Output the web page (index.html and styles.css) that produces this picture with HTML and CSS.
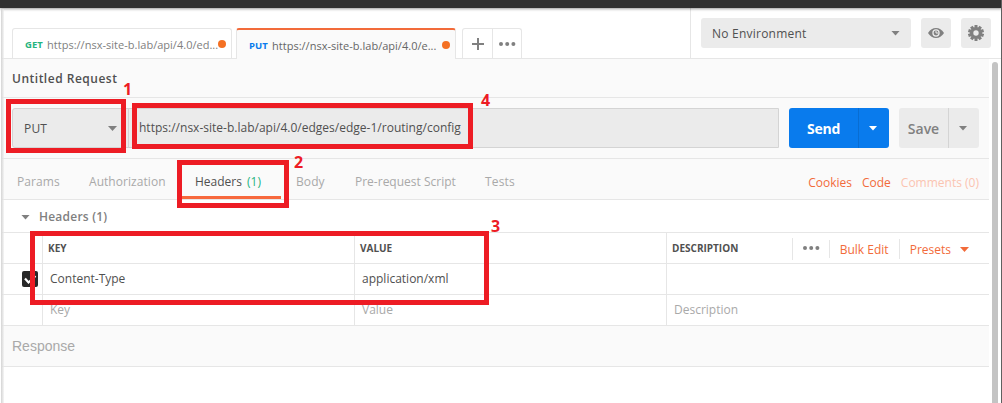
FILE: index.html
```html
<!DOCTYPE html>
<html lang="en">
<head>
<meta charset="utf-8">
<title>Untitled Request</title>
<link rel="stylesheet" href="styles.css">
</head>
<body>
<div class="app">
  <div class="titlebar"></div>
  <header class="top">
    <nav class="tabs">
      <div class="tab"><span class="method get">GET</span><span class="tab-url first">https://nsx-site-b.lab/api/4.0/ed...</span><i class="dot"></i></div>
      <div class="tab active"><span class="method put">PUT</span><span class="tab-url second">https://nsx-site-b.lab/api/4.0/e...</span><i class="dot"></i></div>
      <div class="tab-tools">
        <span class="tool"><svg width="12" height="12" viewBox="0 0 12 12"><path d="M6 0v12M0 6h12" stroke="#808080" stroke-width="2"/></svg></span>
        <span class="tool"><svg width="17" height="4" viewBox="0 0 17 4" fill="#808080"><circle cx="2" cy="2" r="2"/><circle cx="8.2" cy="2" r="2"/><circle cx="14.4" cy="2" r="2"/></svg></span>
      </div>
    </nav>
    <div class="env">
      <div class="env-select"><span class="env-name">No Environment</span><i class="caret"></i></div>
      <button class="icon-btn"><svg width="16" height="10" viewBox="0 0 16 10"><path d="M0 5Q3.2 0 8 0t8 5Q12.8 10 8 10T0 5z" fill="#808080"/><circle cx="8" cy="5" r="3.7" fill="#ebebeb"/><circle cx="8" cy="5" r="2.4" fill="#808080"/><path d="M8 3v2h2" stroke="#ebebeb" fill="none"/></svg></button>
      <button class="icon-btn"><svg width="16" height="16" viewBox="-8 -8 16 16"><g fill="#808080"><circle r="6"/><path id="t" d="M-1.5-8h3v16h-3z"/><use href="#t" transform="rotate(36)"/><use href="#t" transform="rotate(72)"/><use href="#t" transform="rotate(108)"/><use href="#t" transform="rotate(144)"/></g><circle r="2.7" fill="#ebebeb"/></svg></button>
    </div>
  </header>
  <main class="main">
    <section class="request-name"><span class="name-text">Untitled Request</span></section>
    <section class="builder">
      <div class="url-group">
        <div class="verb"><span class="verb-text">PUT</span><i class="caret"></i></div>
        <div class="url"><span class="url-text">https://nsx-site-b.lab/api/4.0/edges/edge-1/routing/config</span></div>
      </div>
      <div class="split send"><b class="split-label send-text">Send</b><span class="split-drop"><i class="caret"></i></span></div>
      <div class="split save"><b class="split-label save-text">Save</b><span class="split-drop"><i class="caret"></i></span></div>
    </section>
    <section class="subtabs">
      <div class="subtab-list">
        <span class="t-params">Params</span><span class="t-auth">Authorization</span><span class="t-headers">Headers <em>(1)</em></span><span class="t-body">Body</span><span class="t-pre">Pre-request Script</span><span class="t-tests">Tests</span>
      </div>
      <div class="links"><span class="l-cookies">Cookies</span><span class="l-code">Code</span><span class="l-comments">Comments (0)</span></div>
    </section>
    <section class="group"><i class="caret"></i><span class="group-text">Headers (1)</span></section>
    <section class="grid">
      <div class="row head">
        <div class="cell"></div>
        <div class="cell"><span class="h-key">KEY</span></div>
        <div class="cell"><span class="h-value">VALUE</span></div>
        <div class="cell last">
          <span class="h-desc">DESCRIPTION</span>
          <div class="actions">
            <span class="more"><svg width="17" height="4" viewBox="0 0 17 4" fill="#808080"><circle cx="2" cy="2" r="2"/><circle cx="8.2" cy="2" r="2"/><circle cx="14.4" cy="2" r="2"/></svg></span>
            <span class="bulk"><span class="bulk-text">Bulk Edit</span></span>
            <span class="presets"><span class="presets-text">Presets</span><i class="caret"></i></span>
          </div>
        </div>
      </div>
      <div class="row">
        <div class="cell check-cell"><span class="check"><svg width="16" height="16" viewBox="0 0 16 16"><path d="M3 7.5l3.5 4L13.5 5" stroke="#fff" stroke-width="2.2" fill="none"/></svg></span></div>
        <div class="cell"><span class="c-type">Content-Type</span></div>
        <div class="cell"><span class="c-xml">application/xml</span></div>
        <div class="cell"></div>
      </div>
      <div class="row blank">
        <div class="cell"></div>
        <div class="cell"><span class="p-key">Key</span></div>
        <div class="cell"><span class="p-value">Value</span></div>
        <div class="cell"><span class="p-desc">Description</span></div>
      </div>
    </section>
    <section class="response"><span class="response-text">Response</span></section>
  </main>
  <div class="left-shade"></div>
  <div class="scrollbar"></div>
  <div class="window-edge"></div>
  <div class="mark m1"></div><div class="mark m2"></div><div class="mark m3"></div><div class="mark m4"></div>
  <b class="num n1">1</b><b class="num n2">2</b><b class="num n3">3</b><b class="num n4">4</b>
</div>
</body>
</html>
```
FILE: styles.css
```css
* { box-sizing: border-box; }
body { margin: 0; background: #fff; color: #505050; font: 12px/18px "Open Sans", sans-serif; }
i, em { font-style: normal; }
svg { display: block; }
span { white-space: nowrap; }
.app { position: relative; width: 1002px; height: 403px; overflow: hidden; }
.titlebar { height: 8px; background: #303030; box-shadow: 0 1px 3px #0006; position: relative; }
.top { display: flex; justify-content: space-between; height: 51px; margin-left: 2px; border-bottom: 1px solid #e6e6e6; }
.tabs { display: flex; align-items: flex-end; padding-left: 10px; }
.tab { display: flex; align-items: center; width: 220px; height: 30px; margin-right: 4px; padding: 3px 5px 0 12px; border: 1px solid #e6e6e6; border-bottom: 0; border-radius: 3px 3px 0 0; color: #808080; }
.tab.active { height: 31px; margin-bottom: -1px; border-top: 2px solid #f26b3a; background: #fafafa; color: #666; }
.method { flex: none; width: 22px; font-size: 9.5px; font-weight: 700; }
.put { color: #097bed; width: 23px; }
.get { color: #26b47f; }
.tab-url { font-size: 11px; letter-spacing: .02px; }
.dot { flex: none; width: 8px; height: 8px; margin: -2px 0 0 auto; border-radius: 50%; background: #f47023; }
.tab-tools { display: flex; width: 60px; height: 30px; margin-left: 2px; border: 1px solid #e6e6e6; border-bottom: 0; border-radius: 3px 3px 0 0; }
.tool { display: flex; flex: 1; align-items: center; justify-content: center; padding-left: 1px; }
.tool + .tool { border-left: 1px solid #e6e6e6; padding-left: 0; }
.env { display: flex; align-items: flex-start; gap: 10px; width: 312px; padding: 10px 0 0 10px; border-left: 1px solid #e6e6e6; }
.env-select { display: flex; align-items: center; justify-content: space-between; width: 210px; height: 30px; padding: 0 11px; border-radius: 3px; background: #ebebeb; }
.env-name { padding-top: 2px; letter-spacing: .23px; }
.icon-btn { display: flex; align-items: center; justify-content: center; width: 30px; height: 30px; padding: 0; border: 0; border-radius: 3px; background: #ebebeb; }
.caret { flex: none; width: 9px; height: 5px; background: #808080; clip-path: polygon(0 0, 100% 0, 50% 100%); }
.main { width: 987px; margin-left: 2px; }
.request-name { height: 39px; padding: 11px 10px; border-bottom: 1px solid #e6e6e6; background: #fafafa; font-weight: 600; }
.name-text { letter-spacing: .5px; }
.builder { display: flex; gap: 10px; height: 61px; padding: 10px; border-bottom: 1px solid #e6e6e6; background: #fafafa; }
.url-group { display: flex; width: 767px; height: 40px; border: 1px solid #d4d4d4; border-radius: 3px 0 0 3px; background: #ebebeb; }
.verb { display: flex; align-items: center; justify-content: space-between; width: 116px; padding: 1px 11px 0 11px; border-right: 1px solid #d4d4d4; }
.verb-text { padding-top: 1px; letter-spacing: .2px; }
.url { display: flex; align-items: center; padding-left: 10px; }
.url-text { letter-spacing: .01px; }
.split { display: flex; height: 40px; border-radius: 3px; font-size: 14px; font-weight: 600; }
.send { width: 100px; background: #097bed; color: #fff; }
.save { width: 80px; background: #ebebeb; color: #808080; }
.split-label { flex: 1; display: flex; align-items: center; justify-content: center; padding-top: 2px; font-weight: 600; }
.send .split-label { font-weight: 700; letter-spacing: -.2px; }
.split-drop { display: flex; align-items: center; justify-content: center; width: 31px; border-left: 1px solid #d4d4d4; }
.send .split-drop { border-color: #086dd2; }
.split .caret { margin-right: 2px; }
.send .caret { background: #fff; }
.subtabs { display: flex; justify-content: space-between; height: 41px; border-bottom: 1px solid #e6e6e6; background: #fafafa; color: #a9a9a9; }
.subtab-list { display: flex; }
.subtab-list > span { height: 40px; padding-top: 14px; }
.t-params { margin-left: 15px; width: 72px; letter-spacing: .1px; }
.t-auth { width: 91px; letter-spacing: .05px; }
.t-headers { width: 101px; padding-left: 15px; border-bottom: 3px solid #f7693d; color: #505050; }
.t-headers em { color: #26b47f; margin-left: 2px; }
.t-body { margin-left: 15px; width: 59px; letter-spacing: .1px; }
.t-pre { width: 130px; }
.t-tests { letter-spacing: .15px; }
.links { display: flex; gap: 10px; padding: 15px 10px 0; color: #f26b3a; }
.l-comments { color: #fac4b1; }
.group { display: flex; align-items: center; gap: 8px; height: 32px; padding: 2px 20px 0 19px; color: #808080; font-weight: 600; }
.group-text { margin-left: 1px; letter-spacing: .22px; }
.grid { border-top: 1px solid #e6e6e6; }
.row { display: grid; grid-template-columns: 40px 312px 312px 323px; height: 31px; border-bottom: 1px solid #e6e6e6; }
.cell { display: flex; align-items: center; padding-left: 7px; border-left: 1px solid #e6e6e6; }
.cell:first-child { border-left: 0; }
.head .cell { padding-left: 5px; font-size: 10px; font-weight: 700; }
.actions { display: flex; align-items: center; margin-left: auto; padding: 1px 20px 0 0; color: #f26b3a; font-size: 12px; font-weight: 400; }
.more { display: flex; align-items: center; width: 37px; height: 22px; padding: 0 0 2px 10px; border-left: 1px solid #e6e6e6; }
.bulk { width: 70px; height: 18px; padding: 1px 0 0 10px; border-left: 1px solid #e6e6e6; }
.presets { display: flex; align-items: center; gap: 9px; height: 20px; padding: 2px 0 0 10px; border-left: 1px solid #e6e6e6; }
.presets .caret { background: #f26b3a; }
.row .check-cell { padding-left: 20px; }
.check { flex: none; width: 16px; height: 16px; border-radius: 2px; background: #282828; }
.blank { color: #a9a9a9; }
.response { height: 41px; padding: 11px 10px; border-bottom: 1px solid #e6e6e6; background: #fafafa; color: #a9a9a9; font: 14px/19px "Liberation Sans", sans-serif; }
.left-shade { position: absolute; left: 1px; top: 9px; width: 3px; bottom: 0; background: linear-gradient(90deg, #d4d4d4, #eee8); }
.scrollbar { position: absolute; left: 992px; top: 62px; width: 6px; height: 350px; border-radius: 3px; background: #c4c4c4; }
.window-edge { position: absolute; left: 1001px; top: 0; width: 1px; bottom: 0; background: #606060; }
.mark { position: absolute; border: 5px solid #ed1c24; }
.m1 { left: 6px; top: 99px; width: 120px; height: 54px; }
.m2 { left: 177px; top: 160px; width: 112px; height: 48px; }
.m3 { left: 30px; top: 231px; width: 459px; height: 74px; }
.m4 { left: 132px; top: 103px; width: 341px; height: 46px; }
.num { position: absolute; color: #ed1c24; font: 700 16px/18px "Open Sans", sans-serif; }
.n1 { left: 123px; top: 80px; }
.n2 { left: 294px; top: 153px; }
.n3 { left: 491px; top: 217px; }
.n4 { left: 481px; top: 91px; }
```
